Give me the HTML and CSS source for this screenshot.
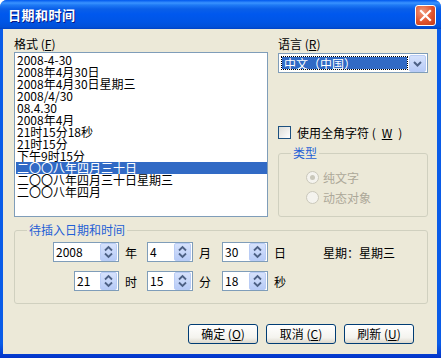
FILE: index.html
```html
<!DOCTYPE html>
<html lang="zh-CN">
<head>
  <meta charset="UTF-8">
  <title>日期和时间</title>
  <link rel="stylesheet" href="styles.css">
</head>
<body>
  <div class="window">
    <div class="titlebar">
      <span class="title">日期和时间</span>
      <span class="close">
        <svg width="21" height="21" viewBox="0 0 21 21"><path d="M6 6 L15 15 M15 6 L6 15" stroke="#fff" stroke-width="2.2" stroke-linecap="square"/></svg>
      </span>
    </div>

    <div class="client">
      <div class="top">
        <div class="formats">
          <div class="label">格式&nbsp;(<u>F</u>)</div>
          <ul class="listbox">
            <li>2008-4-30</li>
            <li>2008年4月30日</li>
            <li>2008年4月30日星期三</li>
            <li>2008/4/30</li>
            <li>08.4.30</li>
            <li>2008年4月</li>
            <li>21时15分18秒</li>
            <li>21时15分</li>
            <li>下午9时15分</li>
            <li class="sel">二〇〇八年四月三十日</li>
            <li>二〇〇八年四月三十日星期三</li>
            <li>二〇〇八年四月</li>
          </ul>
        </div>

        <div class="side">
          <div class="label">语言&nbsp;(<u>R</u>)</div>
          <div class="combo">
            <span class="combo-value">中文（中国）</span>
            <span class="combo-btn">
              <svg width="17" height="17" viewBox="0 0 17 17"><path d="M5 7 L8.5 10.5 L12 7" fill="none" stroke="#4D6185" stroke-width="2"/></svg>
            </span>
          </div>
          <div class="check"><span class="box"></span>使用全角字符&nbsp;(<u>W</u>)</div>
          <fieldset class="group type">
            <legend>类型</legend>
            <div class="radio on"><i></i>纯文字</div>
            <div class="radio"><i></i>动态对象</div>
          </fieldset>
        </div>
      </div>

      <fieldset class="group insert">
        <legend>待插入日期和时间</legend>
        <div class="fields">
          <div class="spin wide"><span>2008</span><b class="spin-btn"></b></div>
          <div class="unit">年</div>
          <div class="spin"><span>4</span><b class="spin-btn"></b></div>
          <div class="unit">月</div>
          <div class="spin"><span>30</span><b class="spin-btn"></b></div>
          <div class="unit">日</div>
          <div class="weekday">星期：星期三</div>

          <div class="spin short"><span>21</span><b class="spin-btn"></b></div>
          <div class="unit">时</div>
          <div class="spin"><span>15</span><b class="spin-btn"></b></div>
          <div class="unit">分</div>
          <div class="spin"><span>18</span><b class="spin-btn"></b></div>
          <div class="unit">秒</div>
        </div>
      </fieldset>

      <div class="buttons">
        <button class="btn">确定&nbsp;(<u>O</u>)</button>
        <button class="btn">取消&nbsp;(<u>C</u>)</button>
        <button class="btn">刷新&nbsp;(<u>U</u>)</button>
      </div>
    </div>
  </div>
</body>
</html>
```

FILE: styles.css
```css
body {
  margin: 0;
  background: #fff;
  font-family: "Noto Sans CJK SC", "Noto Sans", sans-serif;
  font-size: 12px;
  color: #000;
}
.window {
  width: 441px;
  height: 358px;
  display: flex;
  flex-direction: column;
  background: linear-gradient(to bottom, #0A5CE8 0%, #0A5CE8 96%, #0333C8 100%);
  border-radius: 7px 7px 0 0;
  overflow: hidden;
}
.titlebar {
  height: 29px;
  flex: none;
  display: flex;
  align-items: center;
  justify-content: space-between;
  padding: 0 5px 0 8px;
  background: linear-gradient(to bottom, #0058EE 0, #3A93FF 3px, #1F7AF5 5px, #0A5FE8 9px, #0058EE 14px, #0055E5 22px, #0150D8 27px, #0042C4 29px);
}
.title {
  color: #fff;
  font-weight: bold;
  font-size: 13px;
  letter-spacing: 0.5px;
  text-shadow: 1px 1px 0 #0A1883;
}
.close {
  width: 21px;
  height: 21px;
  margin-top: 1px;
  box-sizing: border-box;
  border: 1px solid #fff;
  border-radius: 3px;
  background: radial-gradient(circle at 35% 30%, #F19C7E, #E0532E 55%, #C23A17);
  display: flex;
}
.close svg {
  margin: -1px;
}
.client {
  flex: 1;
  margin: 0 4px 4px 3px;
  background: #ECE9D8;
  padding: 8px 9px 0 11px;
  display: flex;
  flex-direction: column;
}
.label {
  height: 14px;
  line-height: 14px;
  margin-bottom: 1px;
}

/* 上部：格式列表 + 右侧选项 */
.top {
  display: flex;
  gap: 10px;
}
.formats {
  width: 254px;
}
.listbox {
  height: 165px;
  box-sizing: border-box;
  margin: 0;
  padding: 1px 0 0 1px;
  list-style: none;
  border: 1px solid #7F9DB9;
  background: #fff;
}
.listbox li {
  height: 12px;
  line-height: 12px;
  padding-left: 1px;
  white-space: nowrap;
}
.listbox li.sel {
  background: #316AC5;
  color: #fff;
}
.side {
  width: 150px;
  display: flex;
  flex-direction: column;
}
.side .label {
  margin-bottom: 2px;
}
.combo {
  height: 20px;
  box-sizing: border-box;
  border: 1px solid #7F9DB9;
  background: #fff;
  padding: 1px;
  display: flex;
}
.combo-value {
  flex: 1;
  margin: 2px 2px 2px 2px;
  padding-left: 2px;
  background: #316AC5;
  color: #fff;
  outline: 1px dotted #000;
  line-height: 13px;
}
.combo-btn {
  width: 17px;
  height: 17px;
  box-sizing: border-box;
  border: 1px solid #B9CCF5;
  border-radius: 2px;
  background: linear-gradient(to bottom, #D6E2FC, #B7CBF7);
  display: flex;
}
.combo-btn svg {
  margin: -1px;
}
.check {
  display: flex;
  align-items: center;
  gap: 6px;
  height: 13px;
  margin-top: 53px;
}
.box {
  width: 13px;
  height: 13px;
  box-sizing: border-box;
  border: 1px solid #1C5180;
  background: linear-gradient(135deg, #DCDCD7, #fff);
}

/* 分组框 */
.group {
  margin: 0;
  min-width: 0;
  padding: 0 12px;
  border: 1px solid #D0D0BF;
  border-radius: 3px;
}
.group legend {
  padding: 0 2px;
  line-height: 14px;
  color: #1F5FD6;
}
.type {
  flex: 1;
  margin-top: 7px;
}
.radio {
  display: flex;
  align-items: center;
  gap: 4px;
  height: 13px;
  margin: 11px 0 0 15px;
  color: #ACA899;
}
.radio + .radio {
  margin-top: 7px;
}
.radio i {
  width: 13px;
  height: 13px;
  box-sizing: border-box;
  border: 1px solid #CAC8BB;
  border-radius: 50%;
  background: #F4F3EE;
  display: flex;
  align-items: center;
  justify-content: center;
}
.radio.on i::after {
  content: '';
  width: 5px;
  height: 5px;
  border-radius: 50%;
  background: #CAC8BB;
}
.insert {
  margin-top: 6px;
  padding: 5px 12px 12px;
}
.fields {
  margin-left: 26px;
  display: grid;
  grid-template-columns: 66px 28px 46px 29px 46px 55px auto;
  row-gap: 9px;
  align-items: center;
}
.spin {
  height: 20px;
  box-sizing: border-box;
  border: 1px solid #7F9DB9;
  background: #fff;
  padding-right: 1px;
  display: flex;
}
.spin.short {
  width: 45px;
  justify-self: end;
}
.spin span {
  flex: 1;
  padding-left: 2px;
  line-height: 18px;
}
.spin-btn {
  width: 17px;
  box-sizing: border-box;
  border: 1px solid #B9CCF5;
  border-radius: 2px;
  background:
    url("data:image/svg+xml,%3Csvg xmlns='http://www.w3.org/2000/svg' width='15' height='16'%3E%3Cpath d='M4 6.5 L7.5 3 L11 6.5 M4 9.5 L7.5 13 L11 9.5' fill='none' stroke='%234D6185' stroke-width='1.8'/%3E%3C/svg%3E") center no-repeat,
    linear-gradient(to bottom, #D6E2FC, #B7CBF7);
}
.unit {
  padding-left: 6px;
}
.weekday {
  padding-left: 0;
}
.buttons {
  display: flex;
  justify-content: flex-end;
  gap: 8px;
  margin-top: 20px;
  padding-right: 14px;
}
.btn {
  width: 70px;
  height: 20px;
  padding: 0;
  box-sizing: border-box;
  border: 1px solid #003C74;
  border-radius: 3px;
  background: linear-gradient(to bottom, #fff, #F4F3EE 70%, #DCD8CC);
  font: inherit;
  color: #000;
  line-height: 16px;
}
```
